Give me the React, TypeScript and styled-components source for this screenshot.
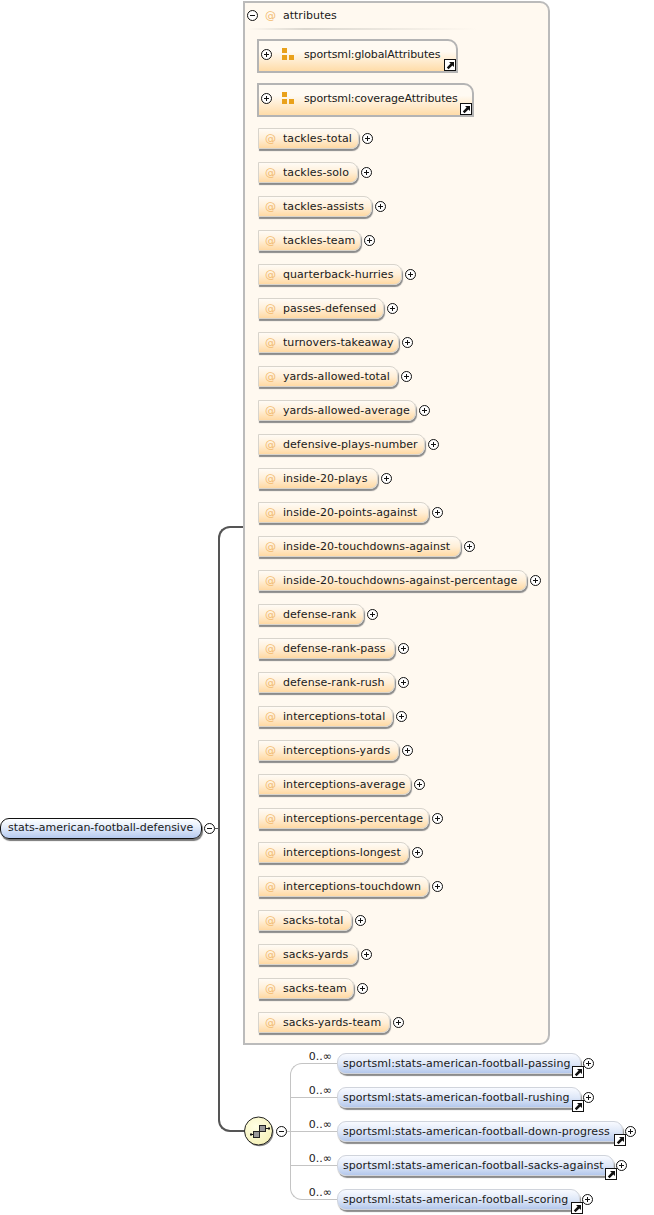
import * as React from 'react';
import styled, {createGlobalStyle} from 'styled-components';

const GlobalStyle = createGlobalStyle`
  html, body {
    margin: 0;
    padding: 0;
    background: #fff;
    overflow: hidden;
  }
  body {
    font-family: "DejaVu Sans", sans-serif;
    font-size: 11px;
    color: #1a1a1a;
  }
`;

const Canvas = styled.div`
  display: flex;
  align-items: flex-start;
  width: 654px;
  height: 1215px;
`;

const RootColumn = styled.div`
  display: flex;
  align-items: center;
  width: 218px;
  margin-top: 818px;
`;

const RootNode = styled.div`
  box-sizing: border-box;
  width: 202px;
  height: 21px;
  flex: none;
  padding-left: 7px;
  line-height: 18px;
  white-space: nowrap;
  border: 1px solid #111;
  border-radius: 9px;
  background: linear-gradient(#fdfeff, #e6eefb 40%, #b6caef);
  box-shadow: 1px 2px 1px #777;
`;

const Tick = styled.div`
  flex: 1;
  height: 1px;
  background: #555;
`;

const Bracket = styled.div`
  box-sizing: border-box;
  flex: none;
  width: 26px;
  height: 606px;
  margin-top: 526px;
  border: 2px solid #555;
  border-right: none;
  border-radius: 12px 0 0 12px;
`;

const SchemaColumn = styled.div`
  display: flex;
  flex-direction: column;
  padding-top: 1px;
  margin-left: -1px;
`;

const Panel = styled.div`
  box-sizing: border-box;
  width: 307px;
  height: 1044px;
  padding: 4px 0 0 12px;
  background: #fff9f0;
  border: 2px solid #bbb;
  border-radius: 0 10px 10px 0;
`;

const PanelHeader = styled.div`
  display: flex;
  align-items: center;
  height: 16px;
  margin-left: -12px;
`;

const AtSign = styled.span`
  flex: none;
  width: 13px;
  text-align: center;
  color: #f2bb70;
`;

const HeaderAt = styled(AtSign)`
  margin-left: 6px;
  margin-right: 6px;
`;

const HeaderRule = styled.div`
  width: 230px;
  height: 2px;
  margin: 5px 0 9px -10px;
  background: linear-gradient(90deg, #fff9f0, #dcd8d0 25%, #fff9f0);
`;

const AttributeRow = styled.div`
  display: flex;
  align-items: center;
  height: 21px;
  margin: 0 0 13px 1px;

  & > svg {
    margin-left: 3px;
  }
`;

const GroupBox = styled.div<{$width: number}>`
  box-sizing: border-box;
  position: relative;
  display: flex;
  align-items: center;
  width: ${(p) => p.$width}px;
  height: 34px;
  margin-bottom: 10px;
  padding-bottom: 3px;
  letter-spacing: -0.12px;
  white-space: nowrap;
  border: 2px solid #b4b4b4;
  border-radius: 0 10px 0 0;
  background: linear-gradient(#fffaf2 35%, #ffdca8);

  & + ${AttributeRow} {
    margin-top: 11px;
  }
`;

const GroupGlyph = styled.svg`
  flex: none;
  margin: 0 9px 0 10px;
`;

const AttributeBox = styled.div<{$width: number}>`
  box-sizing: border-box;
  display: flex;
  align-items: center;
  flex: none;
  width: ${(p) => p.$width}px;
  height: 21px;
  padding-left: 5px;
  letter-spacing: 0.06px;
  white-space: nowrap;
  border: 1px solid #d8d4cc;
  border-radius: 0 8px 8px 0;
  background: linear-gradient(#fffbf5, #ffefd8 50%, #ffd9a3);
  box-shadow: 1px 2px 1px #8b8b8b;
`;

const BoxAt = styled(AtSign)`
  margin-right: 6px;
`;

const ToggleGlyph = styled.svg`
  flex: none;
  display: block;
  margin-left: 2px;
`;

const CompositorRow = styled.div`
  display: flex;
  align-items: center;
  height: 170px;
  margin-top: 1px;
`;

const Compositor = styled.svg`
  flex: none;
  display: block;
`;

const lineColor = '#c4c4c4';

const TreeStub = styled.div`
  flex: none;
  width: 3px;
  height: 1px;
  background: ${lineColor};
`;

const ChildList = styled.div`
  display: flex;
  flex-direction: column;
`;

const ChildRow = styled.div`
  display: flex;
  align-items: center;
  height: 34px;
`;

const Branch = styled.div`
  display: grid;
  flex: none;
  width: 47px;
  height: 34px;
`;

const BranchLine = styled.div<{$pos: 'first' | 'mid' | 'last'}>`
  grid-area: 1 / 1;
  box-sizing: border-box;
  ${(p) =>
    p.$pos === 'first' &&
    `margin-top: 17px; border: solid ${lineColor}; border-width: 1px 0 0 1px; border-radius: 12px 0 0 0;`}
  ${(p) =>
    p.$pos === 'last' &&
    `margin-bottom: 16px; border: solid ${lineColor}; border-width: 0 0 1px 1px; border-radius: 0 0 0 12px;`}
  ${(p) =>
    p.$pos === 'mid' &&
    `background:
      linear-gradient(${lineColor}, ${lineColor}) 0 0 / 1px 100% no-repeat,
      linear-gradient(${lineColor}, ${lineColor}) 0 17px / 100% 1px no-repeat;`}
`;

const Occurs = styled.div`
  grid-area: 1 / 1;
  padding: 4px 5px 0 0;
  font-size: 11px;
  line-height: 13px;
  text-align: right;
  color: #222;
`;

const ChildBox = styled.div<{$width: number}>`
  box-sizing: border-box;
  position: relative;
  display: flex;
  align-items: center;
  flex: none;
  width: ${(p) => p.$width}px;
  height: 21px;
  padding-left: 5px;
  letter-spacing: 0.05px;
  white-space: nowrap;
  border: 1px solid #d0d4dc;
  border-radius: 9px;
  background: linear-gradient(#f8faff, #dfe8f8 50%, #b4c8ec);
  box-shadow: 1px 2px 1px #8b8b8b;
`;

const LinkOverlay = styled.svg<{$right: number; $bottom: number}>`
  position: absolute;
  right: ${(p) => p.$right}px;
  bottom: ${(p) => p.$bottom}px;
  display: block;
`;

const Toggle = ({open}: {open?: boolean}) => (
  <ToggleGlyph width="11" height="11" viewBox="0 0 11 11">
    <circle cx="5.5" cy="5.5" r="5" fill="#fff" stroke="#111" />
    <path d="M3 5.5h5" stroke="#111" />
    {!open && <path d="M5.5 3v5" stroke="#111" />}
  </ToggleGlyph>
);

const LinkIcon = ({right, bottom}: {right: number; bottom: number}) => (
  <LinkOverlay $right={right} $bottom={bottom} width="12" height="12" viewBox="0 0 12 12">
    <rect x="0.5" y="0.5" width="11" height="11" fill="#fff" stroke="#111" />
    <path d="M5 3h5v5L8.4 6.4 4.5 10.2 2.8 8.5l3.8-3.9z" fill="#111" />
  </LinkOverlay>
);

const GroupIcon = () => (
  <GroupGlyph width="13" height="13" viewBox="0 0 13 13">
    <path d="M0 0h5v5H0zM0 7h5v5H0zM7 7h5v5H7z" fill="#e9a11b" />
  </GroupGlyph>
);

const CompositorIcon = () => (
  <Compositor width="31" height="32" viewBox="0 0 31 32">
    <defs>
      <radialGradient id="seq" cx="40%" cy="35%" r="70%">
        <stop offset="0" stopColor="#ffffe4" />
        <stop offset="1" stopColor="#f5f1b8" />
      </radialGradient>
    </defs>
    <circle cx="16.5" cy="17.3" r="14" fill="#8a8a8a" />
    <circle cx="15.5" cy="16" r="14" fill="url(#seq)" stroke="#222" />
    <path d="M8 19.5h3M22 13.5h4" stroke="#111" />
    <rect x="7" y="18.5" width="2" height="2" fill="#111" />
    <rect x="25" y="12.5" width="2" height="2" fill="#111" />
    <rect x="16.5" y="10.5" width="6" height="6" fill="#999" stroke="#222" />
    <rect x="10.5" y="16.5" width="6" height="6" fill="#999" stroke="#222" />
  </Compositor>
);

const attributes: [string, number][] = [
  ['tackles-total', 101],
  ['tackles-solo', 100],
  ['tackles-assists', 114],
  ['tackles-team', 103],
  ['quarterback-hurries', 144],
  ['passes-defensed', 126],
  ['turnovers-takeaway', 141],
  ['yards-allowed-total', 140],
  ['yards-allowed-average', 158],
  ['defensive-plays-number', 167],
  ['inside-20-plays', 120],
  ['inside-20-points-against', 171],
  ['inside-20-touchdowns-against', 203],
  ['inside-20-touchdowns-against-percentage', 269],
  ['defense-rank', 106],
  ['defense-rank-pass', 137],
  ['defense-rank-rush', 137],
  ['interceptions-total', 135],
  ['interceptions-yards', 141],
  ['interceptions-average', 153],
  ['interceptions-percentage', 171],
  ['interceptions-longest', 151],
  ['interceptions-touchdown', 171],
  ['sacks-total', 94],
  ['sacks-yards', 100],
  ['sacks-team', 96],
  ['sacks-yards-team', 132],
];

const children: [string, number][] = [
  ['sportsml:stats-american-football-passing', 244],
  ['sportsml:stats-american-football-rushing', 244],
  ['sportsml:stats-american-football-down-progress', 286],
  ['sportsml:stats-american-football-sacks-against', 277],
  ['sportsml:stats-american-football-scoring', 243],
];

const App = () => (
  <Canvas>
    <GlobalStyle />
    <RootColumn>
      <RootNode>stats-american-football-defensive</RootNode>
      <Toggle open />
      <Tick />
    </RootColumn>
    <Bracket />
    <SchemaColumn>
      <Panel>
        <PanelHeader>
          <Toggle open />
          <HeaderAt>@</HeaderAt>
          attributes
        </PanelHeader>
        <HeaderRule />
        <GroupBox $width={201}>
          <Toggle />
          <GroupIcon />
          sportsml:globalAttributes
          <LinkIcon right={0} bottom={0} />
        </GroupBox>
        <GroupBox $width={217}>
          <Toggle />
          <GroupIcon />
          sportsml:coverageAttributes
          <LinkIcon right={0} bottom={0} />
        </GroupBox>
        {attributes.map(([name, width]) => (
          <AttributeRow key={name}>
            <AttributeBox $width={width}>
              <BoxAt>@</BoxAt>
              {name}
            </AttributeBox>
            <Toggle />
          </AttributeRow>
        ))}
      </Panel>
      <CompositorRow>
        <CompositorIcon />
        <Toggle open />
        <TreeStub />
        <ChildList>
          {children.map(([name, width], i) => (
            <ChildRow key={name}>
              <Branch>
                <BranchLine $pos={i === 0 ? 'first' : i === children.length - 1 ? 'last' : 'mid'} />
                <Occurs>0..∞</Occurs>
              </Branch>
              <ChildBox $width={width}>
                {name}
                <LinkIcon right={-4} bottom={-5} />
              </ChildBox>
              <Toggle />
            </ChildRow>
          ))}
        </ChildList>
      </CompositorRow>
    </SchemaColumn>
  </Canvas>
);

export default App;
